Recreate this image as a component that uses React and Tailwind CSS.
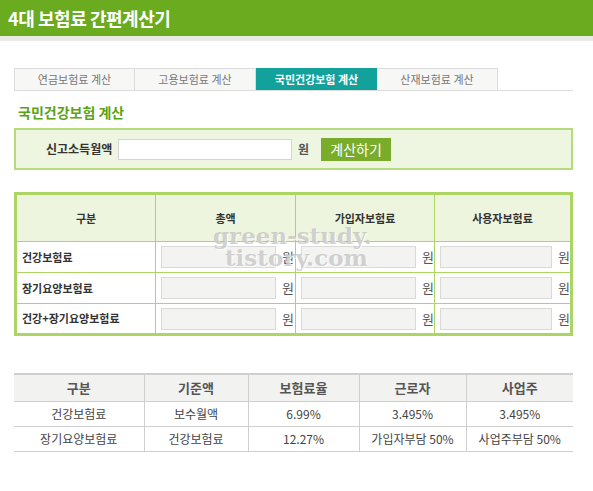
import React from 'react';

const FONT = { fontFamily: '"Noto Sans CJK KR", "Noto Sans", sans-serif' };

const tabs = ['연금보험료 계산', '고용보험료 계산', '국민건강보험 계산', '산재보험료 계산'];

const calcRows = ['건강보험료', '장기요양보험료', '건강+장기요양보험료'];

const rateRows = [
  ['건강보험료', '보수월액', '6.99%', '3.495%', '3.495%'],
  ['장기요양보험료', '건강보험료', '12.27%', '가입자부담 50%', '사업주부담 50%'],
];

const MoneyCell = () => (
  <td className="border border-[#acd563] pl-[5px]">
    <div className="flex items-center gap-[6px]">
      <div className="w-[115px] h-[22px] bg-[#f3f3f1] border border-[#d9d9d6]"></div>
      <span className="text-[13px] text-[#555]">원</span>
    </div>
  </td>
);

export default function App() {
  return (
    <div className="w-[593px] min-h-[491px] bg-white" style={FONT}>
      {/* Header */}
      <div className="h-9 bg-[#6aab1f] flex items-center pl-2">
        <h1 className="text-white text-[18px] font-bold tracking-tight">4대 보험료 간편계산기</h1>
      </div>
      <div className="h-[5px] bg-[#e9e9e5]"></div>

      <div className="px-[14px] pr-[20px]">
        {/* Tabs */}
        <div className="mt-[27px] flex border-b border-[#dcdcdc]">
          {tabs.map((t, i) => (
            <div
              key={t}
              className={
                i === 2
                  ? 'w-[121px] h-[22px] flex items-center justify-center bg-[#13a19c] text-white text-[11px] font-bold'
                  : 'w-[121px] h-[22px] flex items-center justify-center bg-[#f7f7f5] border-t border-r border-[#dcdcdc] text-[#777] text-[11px] first:border-l'
              }
            >
              {t}
            </div>
          ))}
        </div>

        {/* Title */}
        <h2 className="mt-[11px] pl-1 text-[14px] font-bold text-[#5aa315] leading-5">국민건강보험 계산</h2>

        {/* Input box */}
        <div className="mt-[6px] h-[42px] border-2 border-[#b4dc7c] bg-[#eef5e1] flex items-center">
          <span className="ml-[30px] w-[72px] text-[12px] font-bold text-[#333]">신고소득월액</span>
          <div className="w-[174px] h-[21px] bg-white border border-[#d4d4d4]"></div>
          <span className="ml-[6px] text-[12px] font-bold text-[#555]">원</span>
          <button className="ml-[12px] h-[23px] w-[70px] bg-[#7aac2c] text-white text-[14px]">계산하기</button>
        </div>

        {/* Calc table */}
        <div className="relative mt-[22px]">
          <table className="w-full table-fixed border-collapse border-[3px] border-[#acd563] text-[12px] text-[#333]">
            <colgroup>
              <col className="w-[140px]" />
              <col className="w-[140px]" />
              <col className="w-[139px]" />
              <col />
            </colgroup>
            <thead>
              <tr className="h-[48px] bg-[#eef5de]">
                {['구분', '총액', '가입자보험료', '사용자보험료'].map((h) => (
                  <th key={h} className="border border-[#acd563] font-bold text-[11px]">{h}</th>
                ))}
              </tr>
            </thead>
            <tbody>
              {calcRows.map((r) => (
                <tr key={r} className="h-[31px]">
                  <td className="border border-[#acd563] pl-[5px] font-bold text-[11px]">{r}</td>
                  <MoneyCell />
                  <MoneyCell />
                  <MoneyCell />
                </tr>
              ))}
            </tbody>
          </table>
          {/* watermark */}
          <div
            className="absolute left-[199px] top-[33px] text-[23px] font-bold leading-[22px] text-[#b4b4b4]/60 pointer-events-none"
            style={{ fontFamily: '"DejaVu Serif", serif', textShadow: '1px 1px 0 rgba(255,255,255,0.8)' }}
          >
            <div>green-study.</div>
            <div className="pl-[12px]">tistory.com</div>
          </div>
        </div>

        {/* Rate table */}
        <table className="mt-[37px] w-full table-fixed border-collapse border-t-2 border-[#cfcfcf] text-[12px] text-[#444] text-center">
          <colgroup>
            <col className="w-[130px]" />
            <col className="w-[104px]" />
            <col className="w-[111px]" />
            <col className="w-[107px]" />
            <col />
          </colgroup>
          <thead>
            <tr className="h-[27px] bg-[#f2f2f0]">
              {['구분', '기준액', '보험료율', '근로자', '사업주'].map((h) => (
                <th key={h} className="border-b border-r last:border-r-0 border-[#cfcfcf] font-bold text-[13px] text-[#555]">{h}</th>
              ))}
            </tr>
          </thead>
          <tbody>
            {rateRows.map((r) => (
              <tr key={r[0]} className="h-[25px]">
                {r.map((c, i) => (
                  <td key={i} className="border-b border-r last:border-r-0 border-[#cfcfcf]">{c}</td>
                ))}
              </tr>
            ))}
          </tbody>
        </table>
      </div>
    </div>
  );
}
